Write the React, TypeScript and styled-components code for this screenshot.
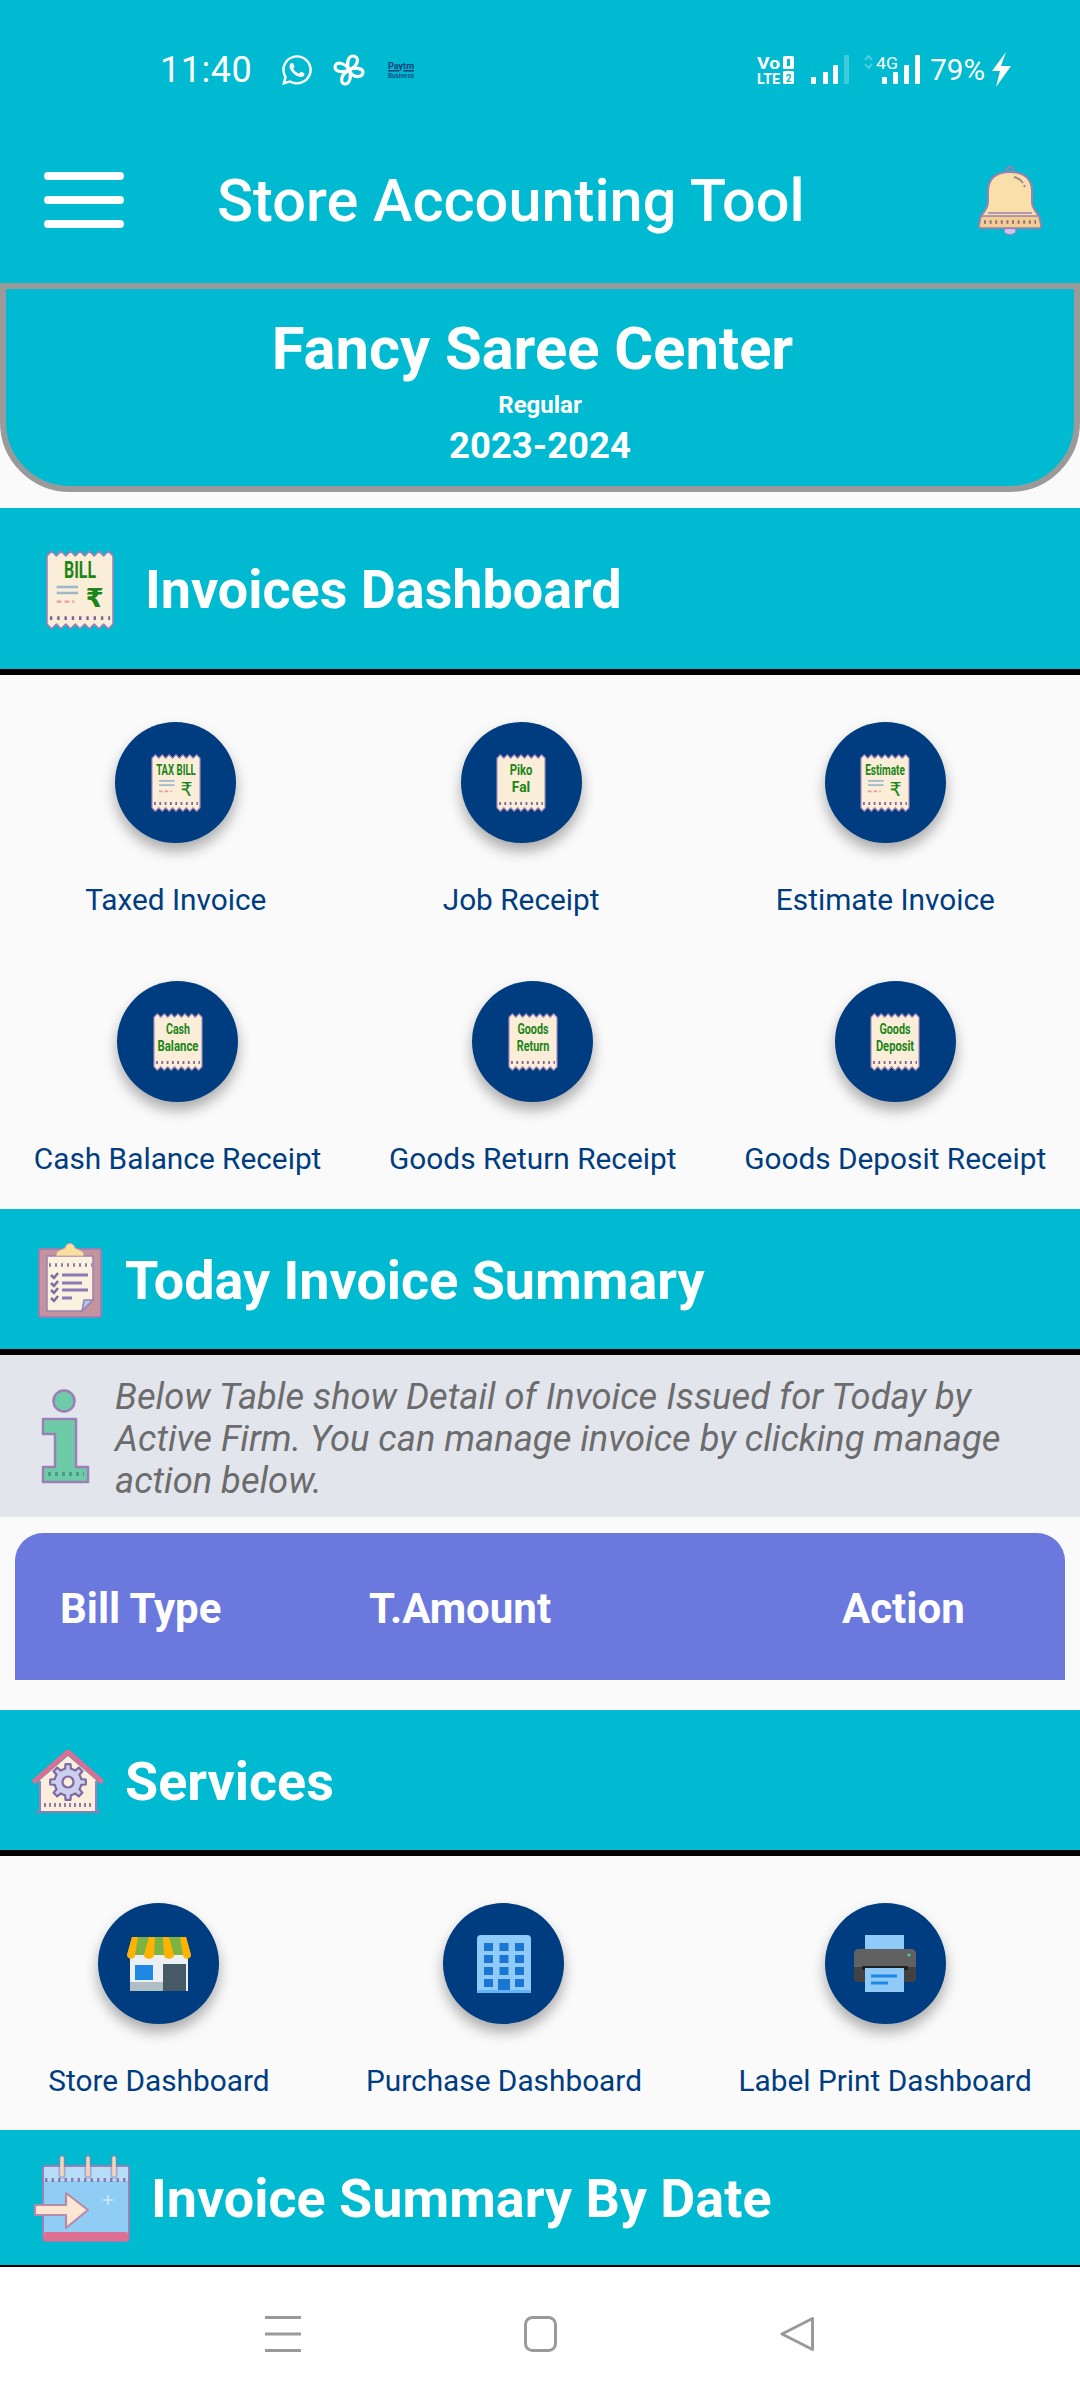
import React from "react";
import styled, { createGlobalStyle } from "styled-components";
import { FaWhatsapp } from "react-icons/fa";

const GlobalStyle = createGlobalStyle`
  html, body {
    margin: 0;
    padding: 0;
    background: #fafafa;
    font-family: Roboto, "Liberation Sans", sans-serif;
  }
  * {
    box-sizing: border-box;
  }
  svg {
    flex-shrink: 0;
    display: block;
    overflow: visible;
  }
`;

const TEAL = "#00bad1";
const NAVY = "#003d80";
const LILAC = "#9a80b4";
const GREEN = "#1b8518";

const Page = styled.div`
  width: 1080px;
  height: 2400px;
  overflow: hidden;
  display: flex;
  flex-direction: column;
  background: #fafafa;
`;

const TopArea = styled.div`
  height: 283px;
  background: ${TEAL};
  display: flex;
  flex-direction: column;
`;

const StatusBar = styled.div`
  height: 137px;
  padding: 2px 69px 0 160px;
  display: flex;
  align-items: center;
  justify-content: space-between;
  color: #fff;
`;

const StatusGroup = styled.div`
  display: flex;
  align-items: center;
`;

const StatusSlot = styled.span<{ $left: number }>`
  display: flex;
  margin-left: ${(p) => p.$left}px;
`;

const Clock = styled.span`
  font-size: 36px;
  letter-spacing: 0.5px;
`;

const Percent = styled.span`
  font-size: 29.5px;
`;

const Toolbar = styled.div`
  flex: 1;
  display: flex;
  align-items: center;
  padding: 0 38px 20px 44px;
`;

const ToolbarTitle = styled.div`
  flex: 1;
  margin: 2px 0 0 93px;
  font-size: 59.5px;
  font-weight: 500;
  color: #fff;
`;

const FirmCard = styled.div`
  height: 209px;
  flex-shrink: 0;
  background: ${TEAL};
  border: 6px solid #9a9a9a;
  border-radius: 0 0 70px 70px;
  display: flex;
  flex-direction: column;
  align-items: center;
  color: #fff;
  padding-top: 26px;
`;

const FirmName = styled.div`
  font-size: 59.7px;
  font-weight: 700;
  line-height: 68px;
  margin-left: -15px;
`;

const FirmType = styled.div`
  font-size: 24px;
  font-weight: 700;
  line-height: 28px;
  margin-top: 8px;
`;

const FirmYear = styled.div`
  font-size: 36.5px;
  font-weight: 700;
  line-height: 44px;
  margin-top: 5px;
`;

const SectionHeader = styled.div<{ $height: number; $line: number; $top?: number; $left: number; $gap: number }>`
  height: ${(p) => p.$height}px;
  flex-shrink: 0;
  margin-top: ${(p) => p.$top ?? 0}px;
  background: ${TEAL};
  border-bottom: ${(p) => p.$line}px solid #000;
  display: flex;
  align-items: center;
  color: #fff;
  gap: ${(p) => p.$gap}px;
  padding-left: ${(p) => p.$left}px;
  padding-top: 2px;
  font-size: 53.9px;
  font-weight: 700;
`;

const ActionRow = styled.div<{ $height: number; $spread?: number }>`
  height: ${(p) => p.$height}px;
  flex-shrink: 0;
  margin: 0 ${(p) => -(p.$spread ?? 0)}px;
  display: flex;
  justify-content: space-around;
  align-items: flex-start;
  padding-top: 47px;
`;

const ActionItem = styled.div`
  display: flex;
  flex-direction: column;
  align-items: center;
  gap: 40px;
`;

const ActionCircle = styled.div`
  width: 121px;
  height: 121px;
  border-radius: 50%;
  background: ${NAVY};
  box-shadow: 0 8px 14px rgba(0, 0, 0, 0.32);
  display: flex;
  align-items: center;
  justify-content: center;
`;

const ActionLabel = styled.div`
  font-size: 29.8px;
  line-height: 34px;
  color: ${NAVY};
  white-space: nowrap;
`;

const InfoBar = styled.div`
  height: 162px;
  flex-shrink: 0;
  background: #e2e5ec;
  display: flex;
  align-items: center;
  padding: 0 30px 0 40px;
  gap: 25px;
`;

const InfoText = styled.div`
  font-size: 36.3px;
  line-height: 42px;
  padding-top: 6px;
  font-style: italic;
  color: #6c6c6c;
`;

const TableHead = styled.div`
  height: 147px;
  flex-shrink: 0;
  margin: 16px 15px 30px;
  padding: 3px 0 0 45px;
  background: #6b78de;
  border-radius: 28px 28px 0 0;
  display: flex;
  align-items: center;
  color: #fff;
  font-size: 42px;
  font-weight: 700;
`;

const HeadCell = styled.div<{ $width: number }>`
  width: ${(p) => p.$width}px;
`;

const NavBar = styled.div`
  flex: 1;
  background: #fff;
  display: flex;
  align-items: center;
  justify-content: center;
  gap: 223px;
`;

const HamburgerIcon = () => (
  <svg width="80" height="56" viewBox="0 0 80 56">
    <g fill="#fff">
      <rect x="0" y="0" width="80" height="8" rx="4" />
      <rect x="0" y="24" width="80" height="8" rx="4" />
      <rect x="0" y="48" width="80" height="8" rx="4" />
    </g>
  </svg>
);

const BellIcon = () => (
  <svg width="64" height="69" viewBox="0 0 64 69">
    <ellipse cx="32" cy="65" rx="6" ry="3.5" fill="#cfc4ec" stroke={LILAC} strokeWidth="1" />
    <circle cx="32" cy="4" r="3" fill="none" stroke={LILAC} strokeWidth="2" />
    <path
      d="M32 6C20 6 11 10 10 24V36C10 42 6 46 3 50L1 60Q1 62 3 62H61Q63 62 63 60L61 50C58 46 54 42 54 36V24C53 10 44 6 32 6Z"
      fill="#f9e0a8"
      stroke={LILAC}
      strokeWidth="2"
    />
    <path d="M3 50H61L63 60Q63 62 61 62H3Q1 62 1 60Z" fill="#f2cf90" stroke={LILAC} strokeWidth="1.5" />
    <path d="M6 56H58" stroke="#8d6f88" strokeWidth="3.5" strokeDasharray="2 3.6" />
    <path d="M10 47H54" stroke={LILAC} strokeWidth="1.5" />
    <path d="M36 11C40 12 43 14 45 17M46 19L47 21" stroke="#a58a90" strokeWidth="2" fill="none" />
  </svg>
);

const PinwheelIcon = () => (
  <svg width="32" height="32" viewBox="0 0 32 32" fill="none" stroke="#fff" strokeWidth="3.2" strokeLinejoin="round">
    <path d="M16 16C13 10 15 2 20 2C26 2 27 11 16 16Z" />
    <path d="M16 16C22 12 30 15 30 18C30 24 20 25 16 16Z" />
    <path d="M16 16C19 21 17 30 12 30C7 30 7 21 16 16Z" />
    <path d="M16 16C10 19 2 18 2 13C2 7 12 8 16 16Z" />
  </svg>
);

const PaytmIcon = () => (
  <svg width="26" height="17" viewBox="0 0 26 17">
    <text x="0" y="7.5" fontSize="9" fontWeight="700" fill="#0a3f7d" fontFamily="Roboto" textLength="26" lengthAdjust="spacingAndGlyphs">
      Paytm
    </text>
    <rect x="0" y="9" width="11" height="1.5" fill="#0a3f7d" />
    <rect x="15" y="9" width="11" height="1.5" fill="#0a3f7d" />
    <text x="0" y="16.5" fontSize="7" fontWeight="500" fill="#0a3f7d" fontFamily="Roboto" textLength="26" lengthAdjust="spacingAndGlyphs">
      Business
    </text>
  </svg>
);

const VolteIcon = () => (
  <svg width="37" height="28" viewBox="0 0 37 28">
    <g fill="#fff" fontFamily="Roboto" fontWeight="700">
      <text x="0" y="13" fontSize="17" textLength="23" lengthAdjust="spacingAndGlyphs">
        Vo
      </text>
      <text x="0" y="28" fontSize="15" textLength="23" lengthAdjust="spacingAndGlyphs">
        LTE
      </text>
      <rect x="26" y="0" width="11" height="13" rx="1.5" />
      <rect x="30" y="3" width="3" height="7" fill={TEAL} />
      <rect x="26" y="15" width="11" height="13" rx="1.5" />
      <text x="31.5" y="26" fontSize="10" textAnchor="middle" fill={TEAL}>
        2
      </text>
    </g>
  </svg>
);

const SignalIcon = () => (
  <svg width="38" height="29" viewBox="0 0 38 29">
    <g fill="#fff">
      <rect x="0" y="22" width="5" height="7" rx="1" />
      <rect x="12" y="17" width="5" height="12" rx="1" />
      <rect x="22" y="10" width="5" height="19" rx="1" />
    </g>
    <rect x="33" y="0" width="5" height="29" rx="1" fill="#fff" opacity="0.25" />
  </svg>
);

const Signal4GIcon = () => (
  <svg width="56" height="29" viewBox="0 0 56 29">
    <path d="M1 5L4.5 1L8 5M1 9L4.5 13L8 9" stroke="#fff" strokeOpacity="0.3" strokeWidth="2" fill="none" />
    <text x="12" y="14" fontSize="17" fill="#fff" fontFamily="Roboto" textLength="22" lengthAdjust="spacingAndGlyphs">
      4G
    </text>
    <g fill="#fff">
      <rect x="18" y="22" width="5" height="7" rx="1" />
      <rect x="29" y="17" width="5" height="12" rx="1" />
      <rect x="40" y="10" width="5" height="19" rx="1" />
      <rect x="51" y="0" width="5" height="29" rx="1" />
    </g>
  </svg>
);

const BoltIcon = () => (
  <svg width="19" height="35" viewBox="0 0 19 35">
    <path d="M14 0L9 14H19L4 35L8 19H0Z" fill="#fff" />
  </svg>
);

const billOutline = () => {
  const step = 68 / 7;
  let top = "M0 5";
  let bottom = "";
  for (let i = 0; i < 7; i++) {
    top += `L${(i + 0.5) * step} 0L${(i + 1) * step} 5`;
    bottom += `L${68 - (i + 0.5) * step} 80L${68 - (i + 1) * step} 75`;
  }
  return `${top}V75${bottom}Z`;
};

type BillLine = { text: string; length: number };

const BillIcon = ({
  lines,
  width,
  height,
  rupee,
  fontSize,
}: {
  lines: BillLine[];
  width: number;
  height: number;
  rupee?: boolean;
  fontSize: number;
}) => (
  <svg width={width} height={height} viewBox="-1 -1 70 82">
    <path d={billOutline()} fill="#faeed8" stroke={LILAC} strokeWidth="1.6" strokeLinejoin="round" />
    <path d="M3 69H65" stroke="#7e62a0" strokeWidth="4" strokeDasharray="2.5 5" />
    {lines.map((line, i) => (
      <text
        key={line.text}
        x={34}
        y={rupee ? 28 : 29 + i * 24}
        textAnchor="middle"
        fontSize={fontSize}
        fontWeight="700"
        fill={GREEN}
        fontFamily="Roboto"
        textLength={line.length}
        lengthAdjust="spacingAndGlyphs"
      >
        {line.text}
      </text>
    ))}
    {rupee && (
      <>
        <path d="M10 37H32M10 43H32" stroke="#9db8cc" strokeWidth="2.5" />
        <path d="M10 52H28" stroke="#e89a9a" strokeWidth="2.5" strokeDasharray="5 3" />
        <text x="49" y="58" textAnchor="middle" fontSize="27" fill={GREEN} fontFamily="DejaVu Sans">
          ₹
        </text>
      </>
    )}
  </svg>
);

const ClipboardIcon = () => (
  <svg width="64" height="76" viewBox="0 0 64 76">
    <rect x="1" y="7" width="62" height="68" rx="2" fill="#c4949e" stroke={LILAC} strokeWidth="2" />
    <path d="M9 14H55V58L44 69H9Z" fill="#fbf1df" stroke={LILAC} strokeWidth="1.5" />
    <path d="M44 69L46 58H55Z" fill="#a9c8ee" stroke={LILAC} strokeWidth="1.5" />
    <path d="M18 14C18 8 24 8 27 6C28 0 36 0 37 6C40 8 46 8 46 14Z" fill="#f8dfa0" stroke="#c9a6a8" />
    <path d="M11 23H54" stroke="#8f7ab0" strokeWidth="3.5" strokeDasharray="2 4" />
    <g fill="none">
      <path d="M13 33L16 36L20 31M13 41L16 44L20 39M13 48L16 51L20 46M13 56L16 59L20 54" stroke="#7e6aa4" strokeWidth="2.5" />
      <path d="M24 33H50M24 41H44M24 48H50M24 56H34" stroke="#8a7ab8" strokeWidth="3" />
    </g>
  </svg>
);

const gearPath = (cx: number, cy: number, outer: number, inner: number, teeth: number) => {
  let d = "";
  const slice = (Math.PI * 2) / teeth;
  for (let i = 0; i < teeth; i++) {
    const a = i * slice;
    const pts: [number, number][] = [
      [inner, a - slice * 0.5],
      [inner, a - slice * 0.28],
      [outer, a - slice * 0.18],
      [outer, a + slice * 0.18],
      [inner, a + slice * 0.28],
    ];
    for (const [r, t] of pts) {
      d += `${d ? "L" : "M"}${(cx + r * Math.cos(t)).toFixed(1)} ${(cy + r * Math.sin(t)).toFixed(1)}`;
    }
  }
  return `${d}Z`;
};

const HouseGearIcon = () => (
  <svg width="70" height="63" viewBox="0 0 70 63">
    <path d="M7 30L35 6L63 30V61H7Z" fill="#fbefdc" />
    <path d="M2 31L35 2L68 31" fill="none" stroke="#d96f95" strokeWidth="5" strokeLinejoin="round" strokeLinecap="round" />
    <path d="M7 31V61M63 31V61" stroke={LILAC} strokeWidth="2" />
    <path d="M2 62H68" stroke="#8f7ab0" strokeWidth="2" />
    <path d="M11 55H59" stroke="#8f7ab0" strokeWidth="4" strokeDasharray="2 3" />
    <path d={gearPath(35, 32, 18, 13.5, 8)} fill="#ccd0ee" stroke="#7e6aa4" strokeWidth="2.2" strokeLinejoin="round" />
    <circle cx="35" cy="32" r="5.5" fill="#fbefdc" stroke="#7e6aa4" strokeWidth="2.2" />
  </svg>
);

const CalendarIcon = () => (
  <svg width="96" height="86" viewBox="0 0 96 86">
    <rect x="9" y="10" width="86" height="75" rx="3" fill="#90cdf4" stroke={LILAC} strokeWidth="2" />
    <rect x="10" y="11" width="84" height="14" fill="#b7dcf8" />
    <rect x="10" y="76" width="84" height="9" rx="2" fill="#dc6f92" />
    <path d="M11 24H93" stroke="#8f7ab0" strokeWidth="4" strokeDasharray="2.5 4" />
    <path d="M28 2V19M54 2V19M80 2V19" stroke="#8f7ab0" strokeWidth="7" strokeLinecap="round" strokeOpacity="0.5" />
    <path d="M28 2V19M54 2V19M80 2V19" stroke="#f3d6b8" strokeWidth="3.5" strokeLinecap="round" />
    <path
      d="M1 49H32V37L54 54L32 72V59H1Z"
      fill="#fbe6d4"
      stroke="#b98aa8"
      strokeWidth="2.2"
      strokeLinejoin="round"
    />
    <path d="M74 39V49M69 44H79" stroke="#bfe4fb" strokeWidth="2" />
  </svg>
);

const InfoIcon = () => (
  <svg width="50" height="95" viewBox="0 0 50 95">
    <circle cx="24" cy="12" r="10.5" fill="#6ecba8" stroke={LILAC} strokeWidth="2.5" />
    <path
      d="M3 30H36V78H48V93H3V78H15V45H3Z"
      fill="#6ecba8"
      stroke={LILAC}
      strokeWidth="2.5"
      strokeLinejoin="round"
    />
    <path d="M8 85H44" stroke="#4d9c88" strokeWidth="4" strokeDasharray="3 4" />
  </svg>
);

const StoreIcon = () => (
  <svg width="64" height="54" viewBox="0 0 64 54">
    <rect x="3" y="16" width="58" height="38" fill="#eceff1" />
    <rect x="3" y="45" width="33" height="9" fill="#b0bec5" />
    <rect x="8" y="28" width="18" height="15" fill="#1e88e5" />
    <rect x="36" y="27" width="23" height="27" fill="#455a64" />
    <path d="M5 0H59L64 18H0Z" fill="#7cb342" />
    <g fill="#ffb300">
      <path d="M5 0H11L8 18C8 23 0 23 0 18Z" />
      <path d="M22 0H28L27 18C27 23 17 23 17 18Z" />
      <path d="M36 0H42L47 18C47 23 37 23 37 18Z" />
      <path d="M53 0H59L64 18C64 23 56 23 56 18Z" />
    </g>
  </svg>
);

const BuildingIcon = () => (
  <svg width="54" height="58" viewBox="0 0 54 58">
    <path d="M0 4Q0 0 4 0H50Q54 0 54 4V58H0Z" fill="#90caf9" />
    <g fill="#1976d2">
      {[8, 20, 32, 44].map((y) =>
        [7, 22.5, 38].map((x) =>
          y === 44 && x === 22.5 ? null : <rect key={`${x}-${y}`} x={x} y={y} width="9" height="8" />
        )
      )}
      <rect x="21" y="44" width="12" height="11" />
    </g>
    <rect x="0" y="55" width="54" height="3" fill="#64b5f6" />
  </svg>
);

const PrinterIcon = () => (
  <svg width="62" height="57" viewBox="0 0 62 57">
    <rect x="11" y="0" width="39" height="16" fill="#90caf9" />
    <path d="M5 14H57Q62 14 62 19V42Q62 47 57 47H5Q0 47 0 42V19Q0 14 5 14Z" fill="#616161" />
    <path d="M0 32H62V42Q62 47 57 47H5Q0 47 0 42Z" fill="#424242" />
    <circle cx="55" cy="20" r="1.6" fill="#4dd0a1" />
    <rect x="8" y="31" width="46" height="4" fill="#212121" />
    <rect x="11" y="33" width="39" height="24" fill="#90caf9" />
    <path d="M17 41H43M17 48H34" stroke="#1e88e5" strokeWidth="3" />
  </svg>
);

const NavMenuIcon = () => (
  <svg width="36" height="36" viewBox="0 0 36 36" stroke="#9a9a9a" strokeWidth="3">
    <path d="M0 1.5H36M0 18H36M0 34.5H36" />
  </svg>
);

const NavHomeIcon = () => (
  <svg width="33" height="36" viewBox="0 0 33 36">
    <rect x="1.5" y="1.5" width="30" height="33" rx="7" fill="none" stroke="#9a9a9a" strokeWidth="3" />
  </svg>
);

const NavBackIcon = () => (
  <svg width="35" height="36" viewBox="0 0 35 36">
    <path d="M32.5 2.5V33.5L2 18Z" fill="none" stroke="#9a9a9a" strokeWidth="3" strokeLinejoin="round" />
  </svg>
);

const smallBill = (lines: BillLine[], rupee = false) => (
  <BillIcon lines={lines} width={50} height={58} rupee={rupee} fontSize={rupee ? 22 : 21} />
);

const rowOne = [
  { label: "Taxed Invoice", icon: smallBill([{ text: "TAX BILL", length: 56 }], true) },
  {
    label: "Job Receipt",
    icon: smallBill([
      { text: "Piko", length: 32 },
      { text: "Fal", length: 26 },
    ]),
  },
  { label: "Estimate Invoice", icon: smallBill([{ text: "Estimate", length: 56 }], true) },
];

const rowTwo = [
  {
    label: "Cash Balance Receipt",
    icon: smallBill([
      { text: "Cash", length: 34 },
      { text: "Balance", length: 58 },
    ]),
  },
  {
    label: "Goods Return Receipt",
    icon: smallBill([
      { text: "Goods", length: 44 },
      { text: "Return", length: 46 },
    ]),
  },
  {
    label: "Goods Deposit Receipt",
    icon: smallBill([
      { text: "Goods", length: 44 },
      { text: "Deposit", length: 54 },
    ]),
  },
];

const services = [
  { label: "Store Dashboard", icon: <StoreIcon /> },
  { label: "Purchase Dashboard", icon: <BuildingIcon /> },
  { label: "Label Print Dashboard", icon: <PrinterIcon /> },
];

const Actions = ({
  items,
  height,
  spread,
}: {
  items: { label: string; icon: React.ReactNode }[];
  height: number;
  spread?: number;
}) => (
  <ActionRow $height={height} $spread={spread}>
    {items.map((item) => (
      <ActionItem key={item.label}>
        <ActionCircle>{item.icon}</ActionCircle>
        <ActionLabel>{item.label}</ActionLabel>
      </ActionItem>
    ))}
  </ActionRow>
);

export default function App() {
  return (
    <Page>
      <GlobalStyle />
      <TopArea>
        <StatusBar>
          <StatusGroup>
            <Clock>11:40</Clock>
            <StatusSlot $left={28}>
              <FaWhatsapp size={34} color="#fff" />
            </StatusSlot>
            <StatusSlot $left={19}>
              <PinwheelIcon />
            </StatusSlot>
            <StatusSlot $left={23}>
              <PaytmIcon />
            </StatusSlot>
          </StatusGroup>
          <StatusGroup>
            <VolteIcon />
            <StatusSlot $left={17}>
              <SignalIcon />
            </StatusSlot>
            <StatusSlot $left={15}>
              <Signal4GIcon />
            </StatusSlot>
            <StatusSlot $left={10}>
              <Percent>79%</Percent>
            </StatusSlot>
            <StatusSlot $left={7}>
              <BoltIcon />
            </StatusSlot>
          </StatusGroup>
        </StatusBar>
        <Toolbar>
          <HamburgerIcon />
          <ToolbarTitle>Store Accounting Tool</ToolbarTitle>
          <BellIcon />
        </Toolbar>
      </TopArea>
      <FirmCard>
        <FirmName>Fancy Saree Center</FirmName>
        <FirmType>Regular</FirmType>
        <FirmYear>2023-2024</FirmYear>
      </FirmCard>
      <SectionHeader $height={167} $line={6} $top={16} $left={46} $gap={31}>
        <BillIcon lines={[{ text: "BILL", length: 33 }]} width={68} height={80} rupee fontSize={24} />
        Invoices Dashboard
      </SectionHeader>
      <Actions items={rowOne} height={259} spread={3} />
      <Actions items={rowTwo} height={275} />
      <SectionHeader $height={146} $line={6} $left={38} $gap={23}>
        <ClipboardIcon />
        Today Invoice Summary
      </SectionHeader>
      <InfoBar>
        <InfoIcon />
        <InfoText>
          Below Table show Detail of Invoice Issued for Today by Active Firm. You can manage invoice by clicking manage
          action below.
        </InfoText>
      </InfoBar>
      <TableHead>
        <HeadCell $width={309}>Bill Type</HeadCell>
        <HeadCell $width={473}>T.Amount</HeadCell>
        <HeadCell $width={200}>Action</HeadCell>
      </TableHead>
      <SectionHeader $height={146} $line={6} $left={33} $gap={22}>
        <HouseGearIcon />
        Services
      </SectionHeader>
      <Actions items={services} height={274} />
      <SectionHeader $height={137} $line={2} $left={34} $gap={21}>
        <CalendarIcon />
        Invoice Summary By Date
      </SectionHeader>
      <NavBar>
        <NavMenuIcon />
        <NavHomeIcon />
        <NavBackIcon />
      </NavBar>
    </Page>
  );
}
